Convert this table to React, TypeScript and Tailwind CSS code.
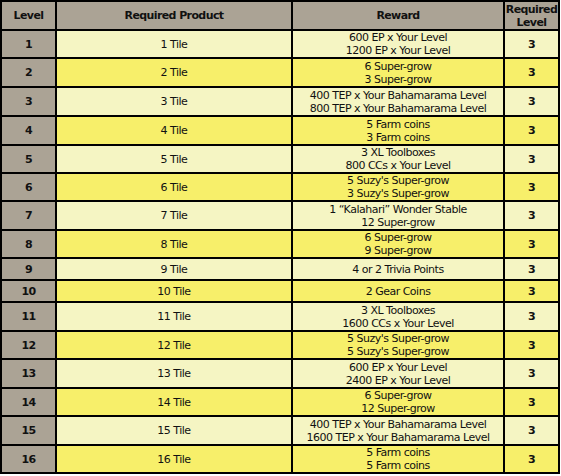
import React from "react";

type Row = { lvl: number; product: string; reward: string[]; req: number };

const rows: Row[] = [
  { lvl: 1, product: "1 Tile", reward: ["600 EP x Your Level", "1200 EP x Your Level"], req: 3 },
  { lvl: 2, product: "2 Tile", reward: ["6 Super-grow", "3 Super-grow"], req: 3 },
  { lvl: 3, product: "3 Tile", reward: ["400 TEP x Your Bahamarama Level", "800 TEP x Your Bahamarama Level"], req: 3 },
  { lvl: 4, product: "4 Tile", reward: ["5 Farm coins", "3 Farm coins"], req: 3 },
  { lvl: 5, product: "5 Tile", reward: ["3 XL Toolboxes", "800 CCs x Your Level"], req: 3 },
  { lvl: 6, product: "6 Tile", reward: ["5 Suzy's Super-grow", "3 Suzy's Super-grow"], req: 3 },
  { lvl: 7, product: "7 Tile", reward: ["1 \u201cKalahari\u201d Wonder Stable", "12 Super-grow"], req: 3 },
  { lvl: 8, product: "8 Tile", reward: ["6 Super-grow", "9 Super-grow"], req: 3 },
  { lvl: 9, product: "9 Tile", reward: ["4 or 2 Trivia Points"], req: 3 },
  { lvl: 10, product: "10 Tile", reward: ["2 Gear Coins"], req: 3 },
  { lvl: 11, product: "11 Tile", reward: ["3 XL Toolboxes", "1600 CCs x Your Level"], req: 3 },
  { lvl: 12, product: "12 Tile", reward: ["5 Suzy's Super-grow", "5 Suzy's Super-grow"], req: 3 },
  { lvl: 13, product: "13 Tile", reward: ["600 EP x Your Level", "2400 EP x Your Level"], req: 3 },
  { lvl: 14, product: "14 Tile", reward: ["6 Super-grow", "12 Super-grow"], req: 3 },
  { lvl: 15, product: "15 Tile", reward: ["400 TEP x Your Bahamarama Level", "1600 TEP x Your Bahamarama Level"], req: 3 },
  { lvl: 16, product: "16 Tile", reward: ["5 Farm coins", "5 Farm coins"], req: 3 },
];

const cell = "flex flex-col items-center justify-center text-center";
const bold = "font-bold tracking-[-0.6px]";

export default function App() {
  return (
    <div className="bg-white w-[561px] h-[476px]">
      <div
        className="inline-grid bg-black p-[2px] gap-[2px] grid-cols-[53px_234px_210px_53px] grid-rows-[27px_26px_27px_27px_27px_26px_26px_27px_26px_20px_20px_27px_26px_27px_26px_27px_26px] text-[11px] leading-[13px] tracking-[-0.5px] text-[#111]"
        style={{ fontFamily: '"DejaVu Sans", Verdana, sans-serif' }}
      >
        <div className={`${cell} bg-[#aba395] ${bold}`}>Level</div>
        <div className={`${cell} bg-[#aba395] ${bold}`}>Required Product</div>
        <div className={`${cell} bg-[#aba395] ${bold}`}>Reward</div>
        <div className={`${cell} bg-[#aba395] ${bold}`}>
          <span>Required</span>
          <span>Level</span>
        </div>
        {rows.map((r, i) => {
          const bg = i % 2 === 0 ? "bg-[#f5f5c3]" : "bg-[#f7ef6a]";
          return (
            <React.Fragment key={r.lvl}>
              <div className={`${cell} bg-[#aba395] ${bold}`}>{r.lvl}</div>
              <div className={`${cell} ${bg}`}>{r.product}</div>
              <div className={`${cell} ${bg}`}>
                {r.reward.map((t, j) => (
                  <span key={j} className="whitespace-nowrap">{t}</span>
                ))}
              </div>
              <div className={`${cell} ${bg} ${bold}`}>{r.req}</div>
            </React.Fragment>
          );
        })}
      </div>
    </div>
  );
}
